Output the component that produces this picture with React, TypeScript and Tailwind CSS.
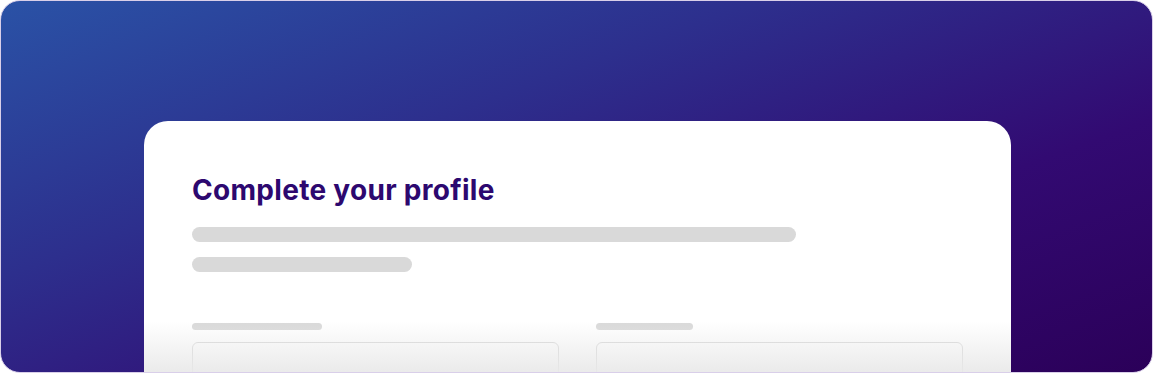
import React from 'react';

const Skeleton = ({ className }: { className: string }) => (
    <div className={`rounded-full bg-[#d9d9d9] ${className}`} />
);

const Field = ({ labelWidth }: { labelWidth: string }) => (
    <div className="flex flex-col">
        <Skeleton className={`h-[7px] ${labelWidth}`} />
        <div className="mt-[12px] h-[48px] rounded-[6px] border border-[#d6d6d6] bg-white" />
    </div>
);

export default function App() {
    return (
        <div className="h-[373px] w-[1153px] overflow-hidden bg-white">
            <div className="relative h-full w-full overflow-hidden rounded-[20px] border border-[#d9cfe9] bg-[linear-gradient(160deg,#2a52a6_0%,#2d2f8d_35%,#320a72_68%,#2b0059_100%)] pl-[143px] pr-[141px] pt-[120px]">
                <div className="relative h-[300px] rounded-t-[24px] bg-white px-[48px] pt-[52px]">
                    <h1 className="font-['Inter',sans-serif] text-[28px] leading-[34px] font-bold tracking-[0.3px] text-[#2d086f]">
                        Complete your profile
                    </h1>
                    <Skeleton className="mt-[20px] h-[15px] w-[604px]" />
                    <Skeleton className="mt-[15px] h-[15px] w-[220px]" />
                    <div className="mt-[51px] grid grid-cols-2 gap-[37px]">
                        <Field labelWidth="w-[130px]" />
                        <Field labelWidth="w-[97px]" />
                    </div>
                    <div className="pointer-events-none absolute inset-x-0 top-[200px] h-[55px] bg-gradient-to-b from-white/0 to-[#e9e9e9]" />
                </div>
            </div>
        </div>
    );
}
